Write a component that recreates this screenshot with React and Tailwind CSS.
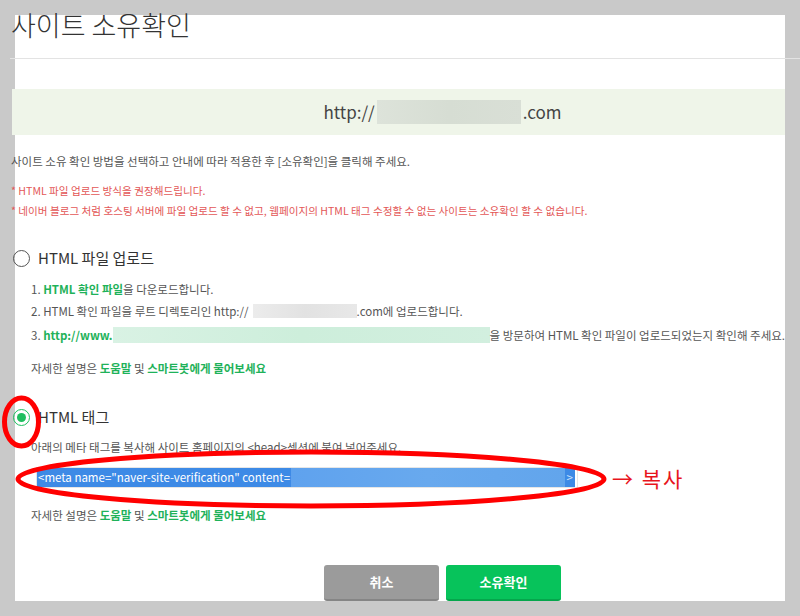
import React from "react";

const font = { fontFamily: '"Noto Sans CJK KR", "Noto Sans", sans-serif' };

function Radio({ checked }) {
  return (
    <span
      className={
        "inline-flex items-center justify-center w-[17px] h-[17px] rounded-full border-[1.5px] " +
        (checked ? "border-[#1fbf5f]" : "border-[#555]")
      }
    >
      {checked && <span className="w-[9px] h-[9px] rounded-full bg-[#1fbf5f]" />}
    </span>
  );
}

function HelpLine() {
  return (
    <div className="h-[16px] leading-[16px] text-[11.5px] text-[#555] ml-[20px]">
      자세한 설명은 <span className="text-[#1fb25a] font-bold">도움말</span> 및{" "}
      <span className="text-[#1fb25a] font-bold">스마트봇에게 물어보세요</span>
    </div>
  );
}

export default function App() {
  return (
    <div className="relative w-[800px] h-[616px] bg-[#c9c9c9] overflow-hidden" style={font}>
      <div className="mx-[15px] mt-[15px] h-[586px] bg-white flex flex-col">
        <h1 className="-mt-[4px] -ml-[4px] h-[28px] leading-[28px] text-[27px] font-light text-[#333]">
          사이트 소유확인
        </h1>
        <div className="mt-[19px] -ml-[5px] -mr-[15px] border-t border-[#e3e3e3]" />
        <div className="mt-[30px] -ml-[3px] h-[48px] pl-[88px] bg-[#eff5e9] flex items-center justify-center text-[17px] text-[#444]">
          <span>http://</span>
          <span className="inline-block w-[144px] h-[24px] mx-[2px] bg-gradient-to-r from-[#dde3da] via-[#d6ddd3] to-[#d9dfd6]" />
          <span>.com</span>
        </div>

        <div className="-ml-[4px] flex flex-col">
          <div className="mt-[18px] h-[16px] leading-[16px] text-[11.5px] text-[#555]">
            사이트 소유 확인 방법을 선택하고 안내에 따라 적용한 후 [소유확인]을 클릭해 주세요.
          </div>
          <div className="mt-[14px] h-[16px] leading-[16px] text-[10.6px] text-[#e35757]">
            * HTML 파일 업로드 방식을 권장해드립니다.
          </div>
          <div className="mt-[4px] h-[16px] leading-[16px] text-[10.6px] text-[#e35757]">
            * 네이버 블로그 처럼 호스팅 서버에 파일 업로드 할 수 없고, 웹페이지의 HTML 태그 수정할 수 없는 사이트는 소유확인 할 수 없습니다.
          </div>

          <div className="mt-[29px] h-[20px] flex items-center gap-[8px] ml-[2px]">
            <Radio />
            <span className="text-[15px] text-[#333]">HTML 파일 업로드</span>
          </div>
          <div className="mt-[13px] h-[16px] leading-[16px] text-[11.5px] text-[#555] ml-[20px]">
            1. <span className="text-[#1fb25a] font-bold">HTML 확인 파일</span>을 다운로드합니다.
          </div>
          <div className="mt-[6px] h-[16px] leading-[16px] text-[11.5px] text-[#555] ml-[20px] flex items-center whitespace-nowrap">
            <span>2. HTML 확인 파일을 루트 디렉토리인 http://</span>
            <span className="inline-block w-[104px] h-[14px] ml-[4px] bg-gradient-to-r from-[#ececec] via-[#e2e2e2] to-[#e8e8e8]" />
            <span>.com에 업로드합니다.</span>
          </div>
          <div className="mt-[8px] h-[16px] leading-[16px] text-[11.5px] text-[#555] ml-[20px] flex items-center whitespace-nowrap">
            <span>3.&nbsp;</span>
            <span className="text-[#1fb25a] font-bold">http://www.</span>
            <span className="inline-block w-[380px] h-[16px] bg-gradient-to-r from-[#d9f2e4] via-[#cdeedb] to-[#d2efdf]" />
            <span>을 방문하여 HTML 확인 파일이 업로드되었는지 확인해 주세요.</span>
          </div>
          <div className="mt-[17px]">
            <HelpLine />
          </div>

          <div className="mt-[31px] h-[20px] flex items-center gap-[8px] ml-[2px]">
            <Radio checked />
            <span className="text-[15px] text-[#333]">HTML 태그</span>
          </div>
          <div className="mt-[12px] h-[16px] leading-[16px] text-[11.5px] text-[#555] ml-[20px]">
            아래의 메타 태그를 복사해 사이트 홈페이지의 &lt;head&gt;섹션에 붙여 넣어주세요.
          </div>
          <div className="mt-[12px] ml-[25px] w-[542px] h-[21px] border border-[#e6e6e6] flex items-center">
            <div className="flex items-center h-[19px] w-[538px] text-[11.5px] text-white">
              <span className="h-full leading-[19px] bg-[#3d8ae6] pl-[1px] pr-[1px] whitespace-nowrap">
                &lt;meta name="naver-site-verification" content=
              </span>
              <span className="h-full flex-1 bg-gradient-to-r from-[#5fa2ee] via-[#68a9ee] to-[#62a5ec]" />
              <span className="h-full leading-[19px] bg-[#3d8ae6] px-[2px] text-[#cfe3fb]">&gt;</span>
            </div>
          </div>
          <div className="mt-[19px]">
            <HelpLine />
          </div>
        </div>

        <div className="mt-[42px] ml-[309px] flex gap-[7px]">
          <button className="w-[115px] h-[36px] rounded-[3px] bg-[#9b9b9b] border-b-2 border-[#858585] text-white text-[13px] font-bold">
            취소
          </button>
          <button className="w-[115px] h-[36px] rounded-[3px] bg-[#07c35b] border-b-2 border-[#05a64c] text-white text-[13px] font-bold">
            소유확인
          </button>
        </div>
      </div>

      <svg className="absolute inset-0 pointer-events-none" width="800" height="616">
        <ellipse cx="21.5" cy="422" rx="17" ry="24" fill="none" stroke="#ff0000" strokeWidth="5" />
        <ellipse cx="311" cy="479" rx="293" ry="27" fill="none" stroke="#ff0000" strokeWidth="5" />
      </svg>
      <div className="absolute left-[612px] top-[465px] text-[21px] tracking-[2px] text-[#e8141c] leading-[26px] whitespace-nowrap">
        → 복사
      </div>
    </div>
  );
}
